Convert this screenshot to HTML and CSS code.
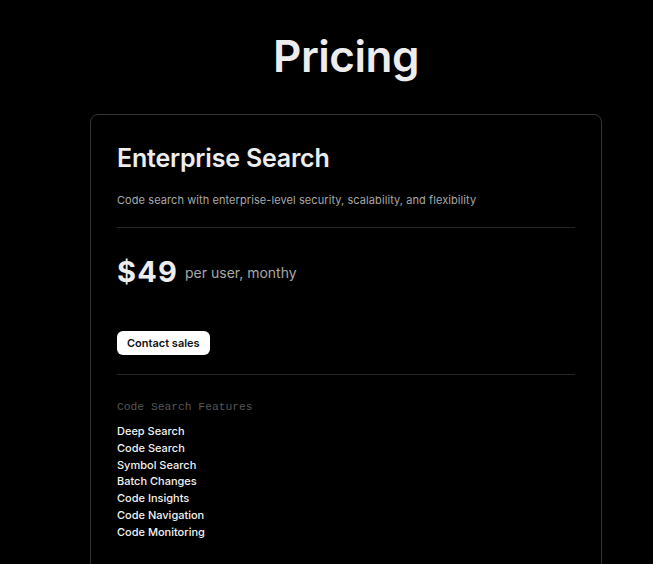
FILE: index.html
```html
<!DOCTYPE html>
<html>
<head>
<meta charset="utf-8">
<link rel="stylesheet" href="styles.css">
</head>
<body>
<main class="page">
  <h1 class="title">Pricing</h1>
  <section class="card">
    <h2 class="plan">Enterprise Search</h2>
    <p class="desc">Code search with enterprise-level security, scalability, and flexibility</p>
    <hr class="rule">
    <div class="price"><span class="amount">$49</span><span class="per">per user, monthy</span></div>
    <a class="btn">Contact sales</a>
    <hr class="rule rule2">
    <div class="feat-head">Code Search Features</div>
    <ul class="features">
      <li>Deep Search</li>
      <li>Code Search</li>
      <li>Symbol Search</li>
      <li>Batch Changes</li>
      <li>Code Insights</li>
      <li>Code Navigation</li>
      <li>Code Monitoring</li>
    </ul>
  </section>
</main>
</body>
</html>
```
FILE: styles.css
```css
html, body { margin: 0; padding: 0; background: #000; }
body { font-family: "Inter", "Liberation Sans", sans-serif; color: #ededed; }
.page { width: 512px; margin-left: 90px; padding-top: 30px; }
.title { margin: 0; text-align: center; font-size: 44px; font-weight: 600; line-height: 52px; color: #ededed; letter-spacing: -0.5px; }
.card { margin-top: 32px; border: 1px solid #343434; border-radius: 8px; padding: 27px 26px 40px; height: 500px; box-sizing: border-box; }
.plan { margin: 0; font-size: 25px; font-weight: 600; line-height: 32px; letter-spacing: -0.2px; color: #ededed; }
.desc { margin: 18px 0 0; font-size: 11px; line-height: 16px; color: #a8a8a8; letter-spacing: 0.08px; }
.rule { border: 0; border-top: 1px solid #262626; margin: 19px 0 0; }
.price { margin-top: 25px; display: flex; align-items: baseline; gap: 7px; line-height: 38px; }
.amount { font-size: 29px; font-weight: 700; color: #ededed; letter-spacing: 1.2px; }
.per { font-size: 14px; color: #a8a8a8; position: relative; top: -4px; }
.btn { display: inline-block; margin-top: 35px; background: #fff; color: #111; font-size: 11px; font-weight: 600; line-height: 24px; padding: 0 10px; border-radius: 6px; }
.rule2 { margin-top: 19px; }
.feat-head { margin-top: 24px; font-family: "Liberation Mono", "DejaVu Sans Mono", monospace; font-size: 11.3px; color: #575757; line-height: 16px; }
.features { list-style: none; margin: 8px 0 0; padding: 0; font-size: 11px; line-height: 16.8px; color: #f2f2f2; font-weight: 500; }
```
